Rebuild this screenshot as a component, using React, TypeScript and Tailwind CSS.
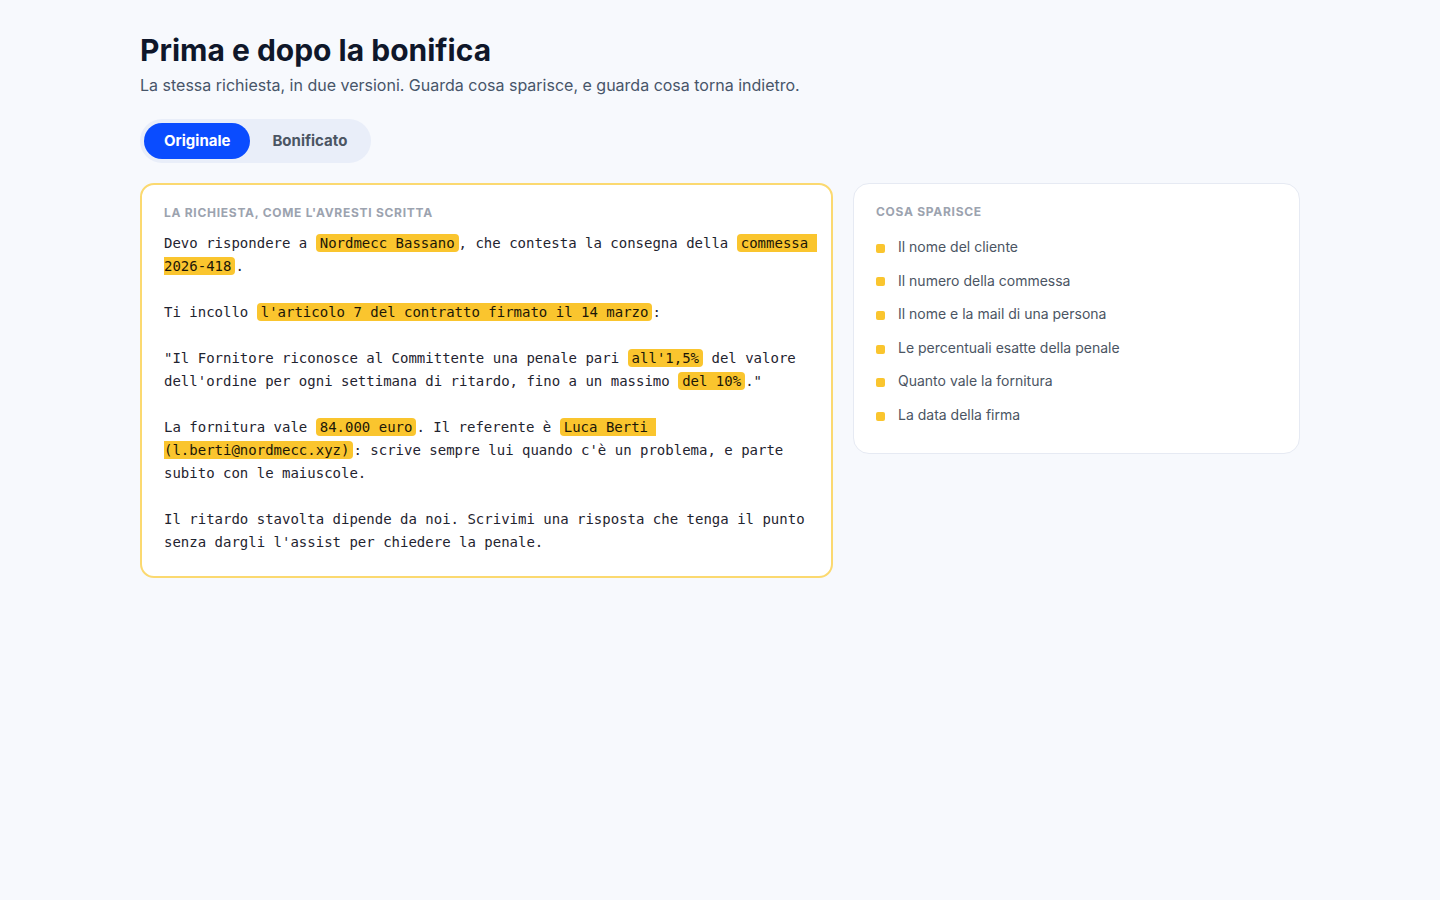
import { Fragment, useState } from "react";

type Part = string | { mark: string };

// The request as one block; marked parts are the sensitive bits
const request: Part[] = [
  "Devo rispondere a ",
  { mark: "Nordmecc Bassano" },
  ", che contesta la consegna della ",
  { mark: "commessa 2026-418" },
  ".\n\nTi incollo ",
  { mark: "l'articolo 7 del contratto firmato il 14 marzo" },
  ':\n\n"Il Fornitore riconosce al Committente una penale pari ',
  { mark: "all'1,5%" },
  " del valore dell'ordine per ogni settimana di ritardo, fino a un massimo ",
  { mark: "del 10%" },
  '."\n\nLa fornitura vale ',
  { mark: "84.000 euro" },
  ". Il referente è ",
  { mark: "Luca Berti (l.berti@nordmecc.xyz)" },
  ": scrive sempre lui quando c'è un problema, e parte subito con le maiuscole.\n\nIl ritardo stavolta dipende da noi. Scrivimi una risposta che tenga il punto senza dargli l'assist per chiedere la penale.",
];

const removed = [
  "Il nome del cliente",
  "Il numero della commessa",
  "Il nome e la mail di una persona",
  "Le percentuali esatte della penale",
  "Quanto vale la fornitura",
  "La data della firma",
];

export default function App() {
  const [tab, setTab] = useState<"orig" | "clean">("orig");

  return (
    <div className="min-h-screen bg-[#f7f9fd] font-['Inter',sans-serif]">
      <div className="max-w-[1160px] mx-auto pt-8">
        <h1 className="text-[30px] leading-9 font-bold text-[#0f172a]">
          Prima e dopo la bonifica
        </h1>
        <p className="mt-[5px] text-base leading-6 text-[#475569]">
          La stessa richiesta, in due versioni. Guarda cosa sparisce, e guarda cosa torna indietro.
        </p>

        {/* Tabs */}
        <div className="mt-[22px] inline-flex gap-[2px] p-1 rounded-full bg-[#e9eef9]">
          <button
            onClick={() => setTab("orig")}
            className={
              tab === "orig"
                ? "px-5 py-2 rounded-full text-[15px] leading-5 font-bold bg-[#0a4cff] text-white"
                : "px-5 py-2 rounded-full text-[15px] leading-5 font-bold text-[#4b5563]"
            }
          >
            Originale
          </button>
          <button
            onClick={() => setTab("clean")}
            className={
              tab === "clean"
                ? "px-5 py-2 rounded-full text-[15px] leading-5 font-bold bg-[#0a4cff] text-white"
                : "px-5 py-2 rounded-full text-[15px] leading-5 font-bold text-[#4b5563]"
            }
          >
            Bonificato
          </button>
        </div>

        <div className="mt-5 grid grid-cols-[minmax(0,1fr)_447px] gap-5 items-start">
          {/* The request text */}
          <div className="bg-white border-2 border-[#fbd970] rounded-[14px] px-[22px] pt-[20px] pb-[22px]">
            <div className="text-xs leading-4 font-bold uppercase tracking-[0.06em] text-[#9ca3af] mb-[11px]">
              La richiesta, come l'avresti scritta
            </div>
            <p className="font-['DejaVu_Sans_Mono',monospace] text-[14px] leading-[23px] text-[#1f2430] whitespace-pre-wrap">
              {request.map((part, j) =>
                typeof part === "string" ? (
                  <Fragment key={j}>{part}</Fragment>
                ) : (
                  <span
                    key={j}
                    className="bg-[#fac52e] text-[#1c1707] rounded-[4px] px-1 py-[1px]"
                  >
                    {part.mark}
                  </span>
                )
              )}
            </p>
          </div>

          {/* What disappears */}
          <div className="bg-white border border-[#e6eaf3] rounded-[16px] px-[22px] pt-[20px] pb-[27px]">
            <div className="text-xs leading-4 font-bold uppercase tracking-[0.06em] text-[#9ca3af] mb-4">
              Cosa sparisce
            </div>
            <ul className="flex flex-col gap-3">
              {removed.map((item) => (
                <li key={item} className="flex items-center text-sm leading-[21.6px] text-[#4b5563]">
                  <span className="w-[9px] h-[9px] mt-[3px] rounded-[2px] bg-[#fac52e] mr-[13px] shrink-0" />
                  {item}
                </li>
              ))}
            </ul>
          </div>
        </div>
      </div>
    </div>
  );
}
